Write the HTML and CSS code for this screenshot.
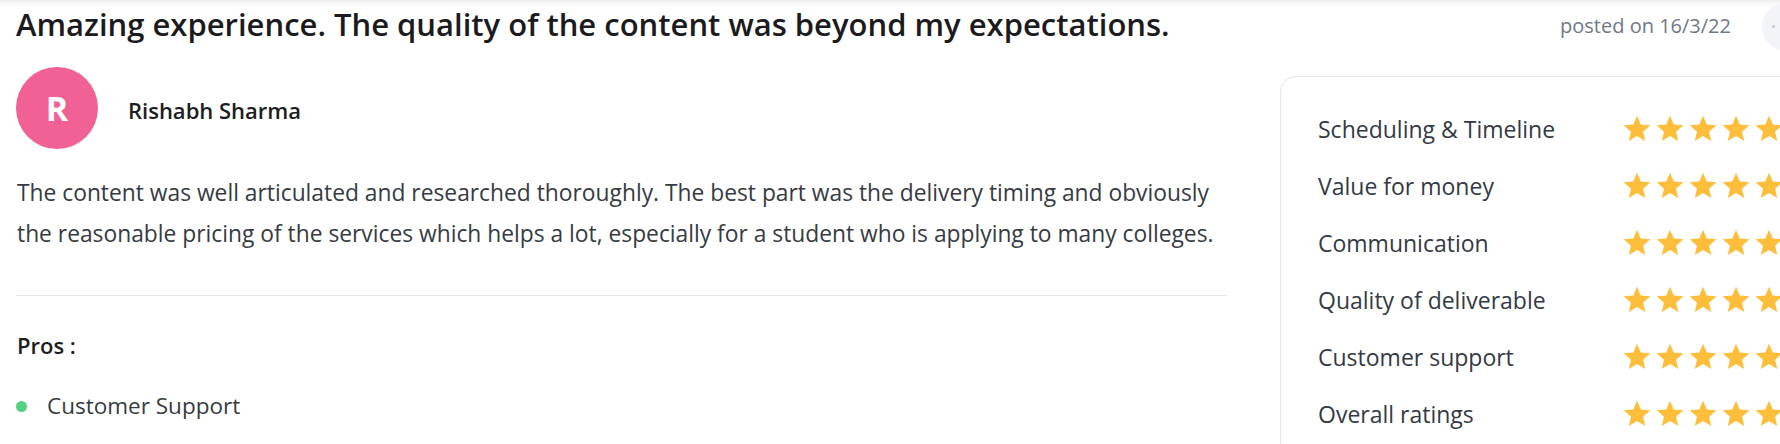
FILE: index.html
```html
<!DOCTYPE html>
<html lang="en">
<head>
<meta charset="utf-8">
<title>Review</title>
<link rel="stylesheet" href="styles.css">
</head>
<body>
<div class="page">
  <header class="head">
    <h1 class="title">Amazing experience. The quality of the content was beyond my expectations.</h1>
    <div class="meta">
      <span class="posted">posted on 16/3/22</span>
      <span class="round-btn"><span class="round-dot"></span></span>
    </div>
  </header>
  <div class="main">
    <section class="left">
      <div class="author">
        <div class="avatar">R</div>
        <div class="name">Rishabh Sharma</div>
      </div>
      <p class="text">The content was well articulated and researched thoroughly. The best part was the delivery timing and obviously the reasonable pricing of the services which helps a lot, especially for a student who is applying to many colleges.</p>
      <hr class="divider">
      <h3 class="pros-title">Pros :</h3>
      <ul class="pros">
        <li class="pro"><span class="dot"></span>Customer Support</li>
      </ul>
    </section>
    <aside class="card">
      <div class="row"><span class="label">Scheduling &amp; Timeline</span><span class="stars">
        <svg class="star" viewBox="0 0 24 24"><path d="M12 17.27L18.18 21l-1.64-7.03L22 9.24l-7.19-.61L12 2 9.19 8.63 2 9.24l5.46 4.73L5.82 21z"/></svg>
        <svg class="star" viewBox="0 0 24 24"><path d="M12 17.27L18.18 21l-1.64-7.03L22 9.24l-7.19-.61L12 2 9.19 8.63 2 9.24l5.46 4.73L5.82 21z"/></svg>
        <svg class="star" viewBox="0 0 24 24"><path d="M12 17.27L18.18 21l-1.64-7.03L22 9.24l-7.19-.61L12 2 9.19 8.63 2 9.24l5.46 4.73L5.82 21z"/></svg>
        <svg class="star" viewBox="0 0 24 24"><path d="M12 17.27L18.18 21l-1.64-7.03L22 9.24l-7.19-.61L12 2 9.19 8.63 2 9.24l5.46 4.73L5.82 21z"/></svg>
        <svg class="star" viewBox="0 0 24 24"><path d="M12 17.27L18.18 21l-1.64-7.03L22 9.24l-7.19-.61L12 2 9.19 8.63 2 9.24l5.46 4.73L5.82 21z"/></svg>
      </span></div>
      <div class="row"><span class="label">Value for money</span><span class="stars">
        <svg class="star" viewBox="0 0 24 24"><path d="M12 17.27L18.18 21l-1.64-7.03L22 9.24l-7.19-.61L12 2 9.19 8.63 2 9.24l5.46 4.73L5.82 21z"/></svg>
        <svg class="star" viewBox="0 0 24 24"><path d="M12 17.27L18.18 21l-1.64-7.03L22 9.24l-7.19-.61L12 2 9.19 8.63 2 9.24l5.46 4.73L5.82 21z"/></svg>
        <svg class="star" viewBox="0 0 24 24"><path d="M12 17.27L18.18 21l-1.64-7.03L22 9.24l-7.19-.61L12 2 9.19 8.63 2 9.24l5.46 4.73L5.82 21z"/></svg>
        <svg class="star" viewBox="0 0 24 24"><path d="M12 17.27L18.18 21l-1.64-7.03L22 9.24l-7.19-.61L12 2 9.19 8.63 2 9.24l5.46 4.73L5.82 21z"/></svg>
        <svg class="star" viewBox="0 0 24 24"><path d="M12 17.27L18.18 21l-1.64-7.03L22 9.24l-7.19-.61L12 2 9.19 8.63 2 9.24l5.46 4.73L5.82 21z"/></svg>
      </span></div>
      <div class="row"><span class="label">Communication</span><span class="stars">
        <svg class="star" viewBox="0 0 24 24"><path d="M12 17.27L18.18 21l-1.64-7.03L22 9.24l-7.19-.61L12 2 9.19 8.63 2 9.24l5.46 4.73L5.82 21z"/></svg>
        <svg class="star" viewBox="0 0 24 24"><path d="M12 17.27L18.18 21l-1.64-7.03L22 9.24l-7.19-.61L12 2 9.19 8.63 2 9.24l5.46 4.73L5.82 21z"/></svg>
        <svg class="star" viewBox="0 0 24 24"><path d="M12 17.27L18.18 21l-1.64-7.03L22 9.24l-7.19-.61L12 2 9.19 8.63 2 9.24l5.46 4.73L5.82 21z"/></svg>
        <svg class="star" viewBox="0 0 24 24"><path d="M12 17.27L18.18 21l-1.64-7.03L22 9.24l-7.19-.61L12 2 9.19 8.63 2 9.24l5.46 4.73L5.82 21z"/></svg>
        <svg class="star" viewBox="0 0 24 24"><path d="M12 17.27L18.18 21l-1.64-7.03L22 9.24l-7.19-.61L12 2 9.19 8.63 2 9.24l5.46 4.73L5.82 21z"/></svg>
      </span></div>
      <div class="row"><span class="label">Quality of deliverable</span><span class="stars">
        <svg class="star" viewBox="0 0 24 24"><path d="M12 17.27L18.18 21l-1.64-7.03L22 9.24l-7.19-.61L12 2 9.19 8.63 2 9.24l5.46 4.73L5.82 21z"/></svg>
        <svg class="star" viewBox="0 0 24 24"><path d="M12 17.27L18.18 21l-1.64-7.03L22 9.24l-7.19-.61L12 2 9.19 8.63 2 9.24l5.46 4.73L5.82 21z"/></svg>
        <svg class="star" viewBox="0 0 24 24"><path d="M12 17.27L18.18 21l-1.64-7.03L22 9.24l-7.19-.61L12 2 9.19 8.63 2 9.24l5.46 4.73L5.82 21z"/></svg>
        <svg class="star" viewBox="0 0 24 24"><path d="M12 17.27L18.18 21l-1.64-7.03L22 9.24l-7.19-.61L12 2 9.19 8.63 2 9.24l5.46 4.73L5.82 21z"/></svg>
        <svg class="star" viewBox="0 0 24 24"><path d="M12 17.27L18.18 21l-1.64-7.03L22 9.24l-7.19-.61L12 2 9.19 8.63 2 9.24l5.46 4.73L5.82 21z"/></svg>
      </span></div>
      <div class="row"><span class="label">Customer support</span><span class="stars">
        <svg class="star" viewBox="0 0 24 24"><path d="M12 17.27L18.18 21l-1.64-7.03L22 9.24l-7.19-.61L12 2 9.19 8.63 2 9.24l5.46 4.73L5.82 21z"/></svg>
        <svg class="star" viewBox="0 0 24 24"><path d="M12 17.27L18.18 21l-1.64-7.03L22 9.24l-7.19-.61L12 2 9.19 8.63 2 9.24l5.46 4.73L5.82 21z"/></svg>
        <svg class="star" viewBox="0 0 24 24"><path d="M12 17.27L18.18 21l-1.64-7.03L22 9.24l-7.19-.61L12 2 9.19 8.63 2 9.24l5.46 4.73L5.82 21z"/></svg>
        <svg class="star" viewBox="0 0 24 24"><path d="M12 17.27L18.18 21l-1.64-7.03L22 9.24l-7.19-.61L12 2 9.19 8.63 2 9.24l5.46 4.73L5.82 21z"/></svg>
        <svg class="star" viewBox="0 0 24 24"><path d="M12 17.27L18.18 21l-1.64-7.03L22 9.24l-7.19-.61L12 2 9.19 8.63 2 9.24l5.46 4.73L5.82 21z"/></svg>
      </span></div>
      <div class="row"><span class="label">Overall ratings</span><span class="stars">
        <svg class="star" viewBox="0 0 24 24"><path d="M12 17.27L18.18 21l-1.64-7.03L22 9.24l-7.19-.61L12 2 9.19 8.63 2 9.24l5.46 4.73L5.82 21z"/></svg>
        <svg class="star" viewBox="0 0 24 24"><path d="M12 17.27L18.18 21l-1.64-7.03L22 9.24l-7.19-.61L12 2 9.19 8.63 2 9.24l5.46 4.73L5.82 21z"/></svg>
        <svg class="star" viewBox="0 0 24 24"><path d="M12 17.27L18.18 21l-1.64-7.03L22 9.24l-7.19-.61L12 2 9.19 8.63 2 9.24l5.46 4.73L5.82 21z"/></svg>
        <svg class="star" viewBox="0 0 24 24"><path d="M12 17.27L18.18 21l-1.64-7.03L22 9.24l-7.19-.61L12 2 9.19 8.63 2 9.24l5.46 4.73L5.82 21z"/></svg>
        <svg class="star" viewBox="0 0 24 24"><path d="M12 17.27L18.18 21l-1.64-7.03L22 9.24l-7.19-.61L12 2 9.19 8.63 2 9.24l5.46 4.73L5.82 21z"/></svg>
      </span></div>
    </aside>
  </div>
</div>
</body>
</html>
```

FILE: styles.css
```css
* { box-sizing: border-box; }
html, body { margin: 0; padding: 0; }
body {
  width: 1780px;
  height: 444px;
  overflow: hidden;
  background: #ffffff linear-gradient(#ececec, #f7f7f7 3px, #ffffff 8px) no-repeat;
  background-size: 100% 10px;
  font-family: "Open Sans", "Noto Sans", sans-serif;
  color: #343a40;
}
.page { width: 1780px; }
.head {
  height: 50px;
  display: flex;
  align-items: center;
  justify-content: space-between;
  padding-left: 16px;
}
.title {
  margin: 0;
  font-size: 31px;
  line-height: 38px;
  font-weight: 600;
  color: #1b1b1f;
  white-space: nowrap;
  margin-top: -3px;
}
.meta {
  display: flex;
  align-items: center;
  margin-right: -30px;
}
.posted {
  font-size: 20px;
  color: #6f7888;
  margin-right: 31px;
}
.round-btn {
  width: 48px;
  height: 48px;
  border-radius: 50%;
  background: #f3f4f8;
  display: flex;
  align-items: center;
  justify-content: flex-start;
  padding-left: 10px;
  margin-top: 3px;
}
.round-dot { width: 3px; height: 3px; background: #c9ccd4; border-radius: 50%; }
.main {
  display: flex;
  align-items: flex-start;
}
.left {
  width: 1227px;
  flex: none;
  padding-left: 16px;
  padding-top: 17px;
}
.author { display: flex; align-items: center; }
.avatar {
  width: 82px;
  height: 82px;
  border-radius: 50%;
  background: #f26196;
  color: #fff;
  font-weight: 700;
  font-size: 34px;
  display: flex;
  align-items: center;
  justify-content: center;
}
.name {
  margin-left: 30px;
  margin-top: 4px;
  font-size: 22px;
  font-weight: 600;
  color: #1d1d22;
}
.text {
  width: 1222px;
  margin: 23px 0 0 1px;
  font-size: 22.8px;
  line-height: 41px;
  color: #363b43;
}
.divider {
  margin: 41px 0 0 0;
  border: 0;
  border-top: 1px solid #e2e4ea;
  height: 0;
}
.pros-title {
  margin: 34px 0 0 1px;
  font-size: 22px;
  line-height: 30px;
  font-weight: 600;
  color: #1d1d22;
}
.pros { list-style: none; margin: 31px 0 0 0; padding: 0; }
.pro {
  display: flex;
  align-items: center;
  font-size: 22.5px;
  line-height: 30px;
  color: #363b43;
}
.dot {
  width: 11px;
  height: 11px;
  border-radius: 50%;
  background: #52d27e;
  margin-right: 20px;
}
.card {
  margin-left: 53px;
  margin-top: 26px;
  width: 560px;
  flex: none;
  border: 1px solid #e3e6ef;
  border-radius: 16px;
  padding: 23px 0 20px 37px;
}
.row {
  height: 57px;
  display: flex;
  align-items: center;
}
.label {
  width: 303px;
  flex: none;
  font-size: 23px;
  color: #343a45;
}
.stars { display: flex; gap: 1px; }
.star { width: 32px; height: 32px; fill: #fdbe3b; display: block; }
```
